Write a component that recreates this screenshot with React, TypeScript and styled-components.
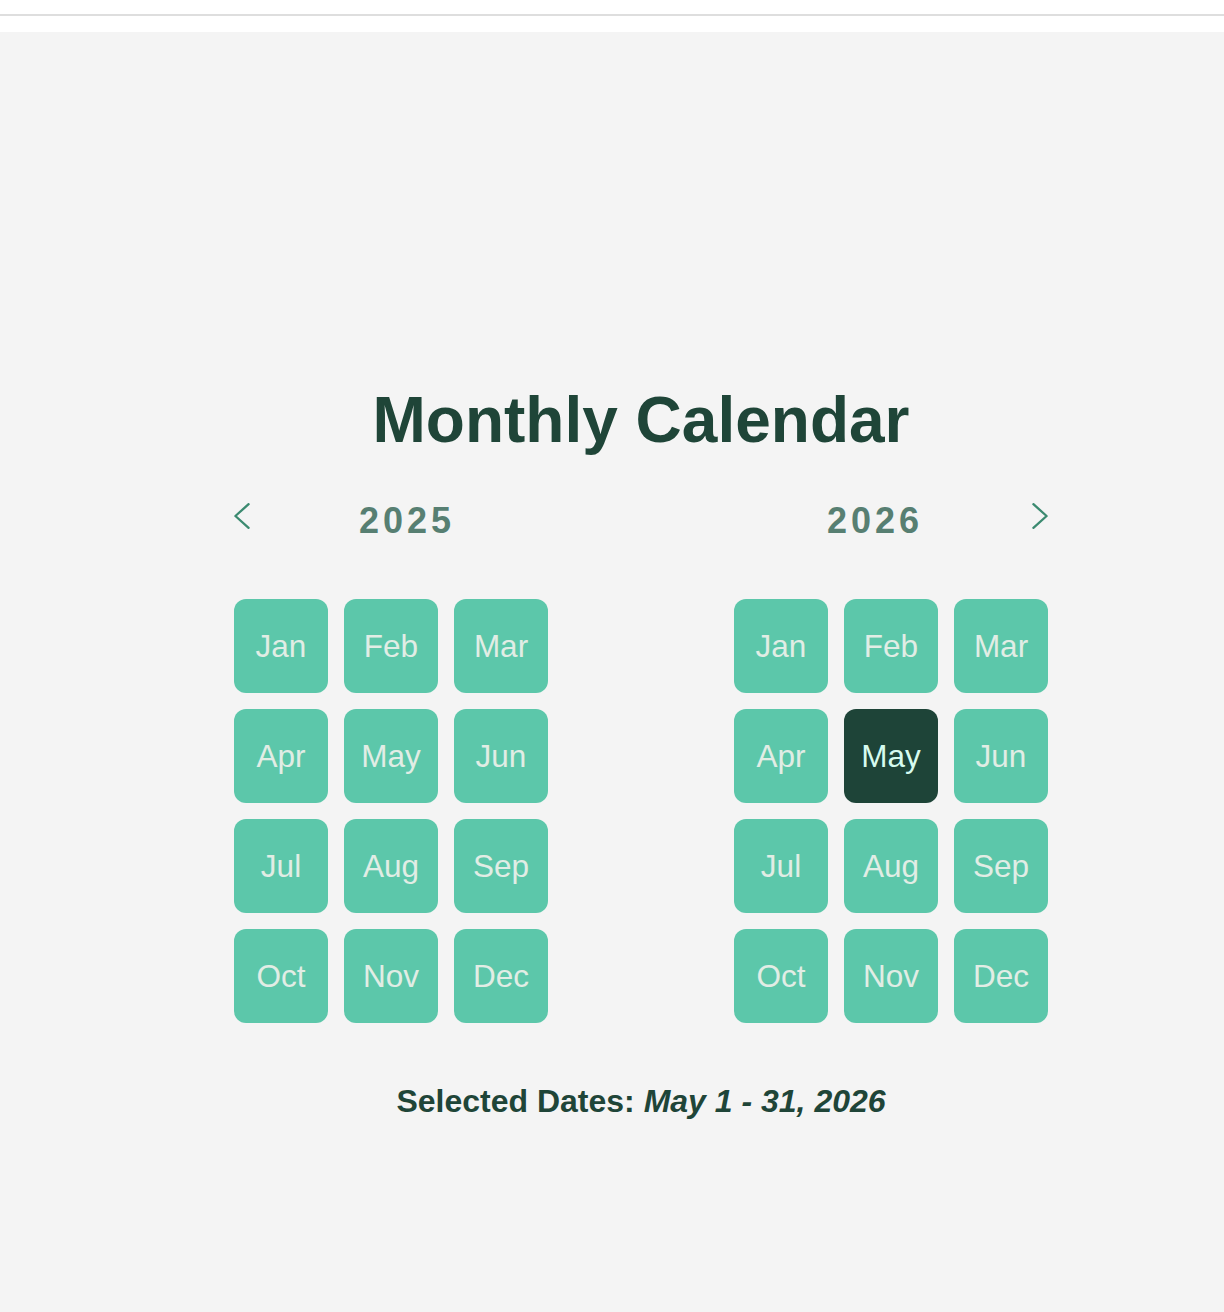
import React, { useState } from "react";
import styled, { createGlobalStyle } from "styled-components";

const GlobalStyle = createGlobalStyle`
  html, body {
    margin: 0;
    padding: 0;
    background: #ffffff;
    font-family: "Liberation Sans", Arial, Helvetica, sans-serif;
  }
  * { box-sizing: border-box; }
`;

const TopBar = styled.div`
  height: 16px;
  border-bottom: 2px solid #dedede;
  background: #ffffff;
`;

const Spacer = styled.div`
  height: 16px;
  background: #ffffff;
`;

const Main = styled.main`
  background: #f4f4f4;
  min-height: 1280px;
  padding: 356px 0 0 58px;
  display: flex;
  flex-direction: column;
  align-items: center;
`;

const Title = styled.h1`
  margin: 0;
  font-size: 64px;
  line-height: 64px;
  font-weight: 700;
  color: #1f4538;
`;

const Calendars = styled.div`
  margin-top: 51px;
  display: flex;
  gap: 186px;
`;

const Panel = styled.section`
  width: 314px;
  display: flex;
  flex-direction: column;
  gap: 60px;
`;

const Header = styled.div`
  display: flex;
  align-items: flex-start;
  height: 36px;
`;

const NavButton = styled.button<{ $side: "left" | "right" }>`
  width: 32px;
  height: 36px;
  padding: 0;
  margin: 0;
  border: none;
  background: transparent;
  cursor: pointer;
  display: flex;
  align-items: flex-start;
  justify-content: ${(p) => (p.$side === "left" ? "flex-start" : "flex-end")};
  color: #3b8a70;
`;

const Year = styled.h2`
  flex: 1;
  margin: 0;
  text-align: center;
  font-size: 36px;
  line-height: 36px;
  font-weight: 700;
  letter-spacing: 4px;
  color: #577f72;
`;

const MonthGrid = styled.div`
  display: grid;
  grid-template-columns: repeat(3, 94px);
  grid-auto-rows: 94px;
  gap: 16px;
`;

const MonthButton = styled.button<{ $selected?: boolean }>`
  border: none;
  border-radius: 12px;
  padding: 0;
  font-family: inherit;
  font-size: 31.5px;
  cursor: pointer;
  background: ${(p) => (p.$selected ? "#1e4438" : "#5cc7aa")};
  color: ${(p) => (p.$selected ? "#d6fbef" : "#e1ede5")};
`;

const Selected = styled.p`
  margin: 62px 0 0 0;
  font-size: 32px;
  line-height: 32px;
  font-weight: 700;
  color: #1f4538;
`;

const SelectedValue = styled.em`
  font-style: italic;
`;

const Chevron = ({ dir }: { dir: "left" | "right" }) => (
  <svg width="16" height="26" viewBox="0 0 16 26" fill="none">
    <path
      d={dir === "left" ? "M14.6 1.2 L1.4 13 L14.6 24.8" : "M1.4 1.2 L14.6 13 L1.4 24.8"}
      stroke="currentColor"
      strokeWidth="2.3"
      strokeLinecap="round"
      strokeLinejoin="round"
    />
  </svg>
);

const MONTHS = ["Jan", "Feb", "Mar", "Apr", "May", "Jun", "Jul", "Aug", "Sep", "Oct", "Nov", "Dec"];

export default function App() {
  const [start, setStart] = useState(2025);
  const [sel, setSel] = useState({ year: 2026, month: 4 });
  const years = [start, start + 1];
  const lastDay = new Date(sel.year, sel.month + 1, 0).getDate();

  return (
    <>
      <GlobalStyle />
      <TopBar />
      <Spacer />
      <Main>
        <Title>Monthly Calendar</Title>
        <Calendars>
          {years.map((y, i) => (
            <Panel key={y}>
              <Header>
                {i === 0 && (
                  <NavButton $side="left" aria-label="Previous" onClick={() => setStart(start - 1)}>
                    <Chevron dir="left" />
                  </NavButton>
                )}
                <Year>{y}</Year>
                {i === 1 && (
                  <NavButton $side="right" aria-label="Next" onClick={() => setStart(start + 1)}>
                    <Chevron dir="right" />
                  </NavButton>
                )}
              </Header>
              <MonthGrid>
                {MONTHS.map((m, mi) => (
                  <MonthButton
                    key={m}
                    $selected={sel.year === y && sel.month === mi}
                    onClick={() => setSel({ year: y, month: mi })}
                  >
                    {m}
                  </MonthButton>
                ))}
              </MonthGrid>
            </Panel>
          ))}
        </Calendars>
        <Selected>
          Selected Dates:{" "}
          <SelectedValue>
            {MONTHS[sel.month]} 1 - {lastDay}, {sel.year}
          </SelectedValue>
        </Selected>
      </Main>
    </>
  );
}
